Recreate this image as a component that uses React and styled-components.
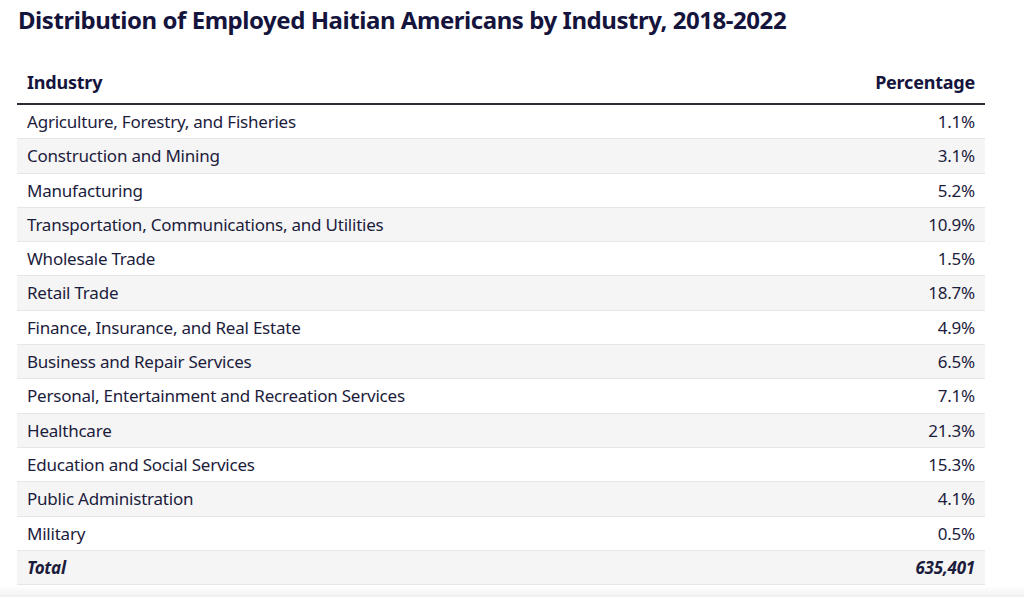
import React from "react";
import styled, { createGlobalStyle } from "styled-components";

const GlobalStyle = createGlobalStyle`
  html, body {
    margin: 0;
    padding: 0;
    background: #ffffff;
  }
  body {
    font-family: "Noto Sans", "Open Sans", sans-serif;
    color: #1c1c3c;
  }
`;

const Page = styled.div`
  padding: 4px 39px 0 17px;
`;

const Title = styled.h2`
  margin: 0 0 0 1px;
  font-size: 24px;
  line-height: 32px;
  font-weight: 700;
  color: #14143c;
  letter-spacing: -0.45px;
`;

const Table = styled.table`
  width: 100%;
  margin-top: 26px;
  border-collapse: collapse;
  font-size: 17px;
  letter-spacing: -0.22px;
`;

const HeadCell = styled.th`
  padding: 8px 10px 8px;
  line-height: 25px;
  font-size: 18px;
  font-weight: 700;
  color: #14143c;
  text-align: ${({ $align }) => $align || "left"};
  border-bottom: 2px solid #2b2b33;
`;

const Row = styled.tr`
  background: ${({ $striped }) => ($striped ? "#f5f5f5" : "#ffffff")};
`;

const Cell = styled.td`
  padding: 4px 10px;
  line-height: 25.3px;
  color: #1c1c3c;
  text-align: ${({ $align }) => $align || "left"};
  border-bottom: 1px solid #e6e6e6;
  font-weight: ${({ $total }) => ($total ? 700 : 400)};
  font-style: ${({ $total }) => ($total ? "italic" : "normal")};
`;

const BottomFade = styled.div`
  height: 14px;
  margin-top: 1px;
  background: linear-gradient(to bottom, #ffffff, #ececec);
`;

const rows = [
  ["Agriculture, Forestry, and Fisheries", "1.1%"],
  ["Construction and Mining", "3.1%"],
  ["Manufacturing", "5.2%"],
  ["Transportation, Communications, and Utilities", "10.9%"],
  ["Wholesale Trade", "1.5%"],
  ["Retail Trade", "18.7%"],
  ["Finance, Insurance, and Real Estate", "4.9%"],
  ["Business and Repair Services", "6.5%"],
  ["Personal, Entertainment and Recreation Services", "7.1%"],
  ["Healthcare", "21.3%"],
  ["Education and Social Services", "15.3%"],
  ["Public Administration", "4.1%"],
  ["Military", "0.5%"],
];

export default function App() {
  return (
    <>
      <GlobalStyle />
      <Page>
        <Title>Distribution of Employed Haitian Americans by Industry, 2018-2022</Title>
        <Table>
          <thead>
            <tr>
              <HeadCell>Industry</HeadCell>
              <HeadCell $align="right">Percentage</HeadCell>
            </tr>
          </thead>
          <tbody>
            {rows.map(([name, pct], i) => (
              <Row key={name} $striped={i % 2 === 1}>
                <Cell>{name}</Cell>
                <Cell $align="right">{pct}</Cell>
              </Row>
            ))}
            <Row $striped>
              <Cell $total>Total</Cell>
              <Cell $total $align="right">635,401</Cell>
            </Row>
          </tbody>
        </Table>
      </Page>
      <BottomFade />
    </>
  );
}
